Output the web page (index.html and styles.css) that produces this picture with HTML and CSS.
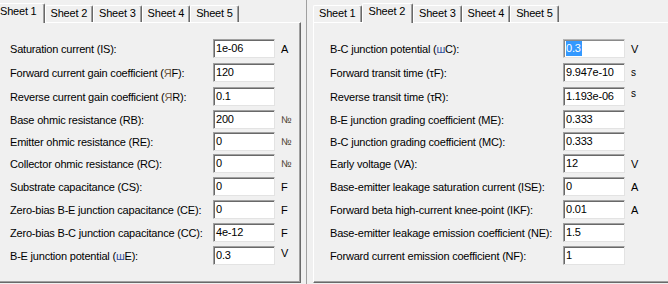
FILE: index.html
```html
<!DOCTYPE html>
<html>
  <head>
    <title>Transistor model parameters</title>
    <link rel="stylesheet" href="styles.css">
  </head>
  <body>
    <div class="window">
      <!-- left pane: sheet 1 -->
      <div class="pane pane-left">
        <div class="tabctl">
          <div class="tabs">
            <div class="tab active">Sheet 1</div>
            <div class="tab">Sheet 2</div>
            <div class="tab">Sheet 3</div>
            <div class="tab">Sheet 4</div>
            <div class="tab">Sheet 5</div>
          </div>
          <div class="page page-left">
            <div class="row">
              <span class="label">Saturation current (IS):</span>
              <div class="field">1e-06</div>
              <span class="unit">A</span>
            </div>
            <div class="row tall">
              <span class="label">Forward current gain coefficient (<span class="odd">Я</span>F):</span>
              <div class="field">120</div>
              <span class="unit"></span>
            </div>
            <div class="row">
              <span class="label">Reverse current gain coefficient (<span class="odd">Я</span>R):</span>
              <div class="field">0.1</div>
              <span class="unit"></span>
            </div>
            <div class="row">
              <span class="label">Base ohmic resistance (RB):</span>
              <div class="field">200</div>
              <span class="unit ohm">№</span>
            </div>
            <div class="row short">
              <span class="label">Emitter ohmic resistance (RE):</span>
              <div class="field">0</div>
              <span class="unit ohm">№</span>
            </div>
            <div class="row">
              <span class="label">Collector ohmic resistance (RC):</span>
              <div class="field">0</div>
              <span class="unit ohm">№</span>
            </div>
            <div class="row">
              <span class="label">Substrate capacitance (CS):</span>
              <div class="field">0</div>
              <span class="unit">F</span>
            </div>
            <div class="row">
              <span class="label">Zero-bias B-E junction capacitance (CE):</span>
              <div class="field">0</div>
              <span class="unit">F</span>
            </div>
            <div class="row">
              <span class="label">Zero-bias B-C junction capacitance (CC):</span>
              <div class="field">4e-12</div>
              <span class="unit">F</span>
            </div>
            <div class="row">
              <span class="label">B-E junction potential (<span class="phi">ш</span>E):</span>
              <div class="field">0.3</div>
              <span class="unit up">V</span>
            </div>
          </div>
        </div>
      </div>

      <!-- right pane: sheet 2 -->
      <div class="pane pane-right">
        <div class="tabctl">
          <div class="tabs">
            <div class="tab">Sheet 1</div>
            <div class="tab active">Sheet 2</div>
            <div class="tab">Sheet 3</div>
            <div class="tab">Sheet 4</div>
            <div class="tab">Sheet 5</div>
          </div>
          <div class="page page-right">
            <div class="row">
              <span class="label">B-C junction potential (<span class="phi">ш</span>C):</span>
              <div class="field focus"><span class="sel">0.3</span></div>
              <span class="unit">V</span>
            </div>
            <div class="row tall">
              <span class="label">Forward transit time (τF):</span>
              <div class="field">9.947e-10</div>
              <span class="unit small">s</span>
            </div>
            <div class="row">
              <span class="label">Reverse transit time (τR):</span>
              <div class="field">1.193e-06</div>
              <span class="unit small up">s</span>
            </div>
            <div class="row">
              <span class="label">B-E junction grading coefficient (ME):</span>
              <div class="field">0.333</div>
              <span class="unit"></span>
            </div>
            <div class="row short">
              <span class="label">B-C junction grading coefficient (MC):</span>
              <div class="field">0.333</div>
              <span class="unit"></span>
            </div>
            <div class="row">
              <span class="label">Early voltage (VA):</span>
              <div class="field">12</div>
              <span class="unit">V</span>
            </div>
            <div class="row">
              <span class="label">Base-emitter leakage saturation current (ISE):</span>
              <div class="field">0</div>
              <span class="unit">A</span>
            </div>
            <div class="row">
              <span class="label">Forward beta high-current knee-point (IKF):</span>
              <div class="field">0.01</div>
              <span class="unit">A</span>
            </div>
            <div class="row">
              <span class="label">Base-emitter leakage emission coefficient (NE):</span>
              <div class="field">1.5</div>
              <span class="unit"></span>
            </div>
            <div class="row">
              <span class="label">Forward current emission coefficient (NF):</span>
              <div class="field">1</div>
              <span class="unit"></span>
            </div>
          </div>
        </div>
      </div>
    </div>
  </body>
</html>
```

FILE: styles.css
```css
* {
  box-sizing: border-box;
}
body {
  margin: 0;
  background: #f0f0f0;
  font-family: "Liberation Sans", Arial, sans-serif;
  font-size: 11px;
  letter-spacing: -0.2px;
  color: #000;
  overflow: hidden;
}
.window {
  display: flex;
  height: 284px;
}
.pane {
  height: 284px;
  overflow: hidden;
}
.pane-left {
  width: 301px;
  flex: none;
}
.pane-right {
  flex: 1;
  margin-left: 5px;
  padding-left: 6px;
  border-left: 1px solid #a0a0a0;
}
.pane-left .tabctl {
  margin-left: -7px;
  width: 308px;
}
.pane-right .tabctl {
  width: 400px;
}

/* tab strip */
.tabs {
  display: flex;
  align-items: flex-end;
  height: 22px;
}
.tab {
  height: 17px;
  line-height: 15px;
  padding: 0 5px;
  border: 1px solid #fff;
  border-right-color: #696969;
  border-bottom: none;
  border-radius: 2px 2px 0 0;
  box-shadow: inset -1px 0 0 #a0a0a0;
  white-space: nowrap;
}
.tab.active {
  height: 20px;
  line-height: 15px;
  margin-bottom: -1px;
  padding: 0 7px 0 6px;
  background: #f0f0f0;
  position: relative;
  z-index: 1;
}

/* tab page */
.page {
  height: 261px;
  border: 1px solid #fff;
  border-right-color: #696969;
  border-bottom-color: #696969;
  box-shadow: inset -1px -1px 0 #a0a0a0;
  padding-top: 14px;
  padding-left: 16px;
}
.row {
  display: grid;
  column-gap: 6px;
  align-items: center;
  height: 23px;
}
.row.tall {
  height: 25px;
}
.row.short {
  height: 21px;
}
.page-left .row {
  grid-template-columns: 197px 62px auto;
}
.page-right .row {
  grid-template-columns: 227px 62px auto;
}
.label {
  white-space: nowrap;
}
.odd {
  color: #6e5a46;
}
.phi {
  color: #2f4f9c;
}

/* sunken edit box */
.field {
  height: 19px;
  line-height: 17px;
  padding-left: 2px;
  background: #fff;
  border-top: 1px solid #a0a0a0;
  border-left: 1px solid #a0a0a0;
  border-right: 1px solid #e3e3e3;
  border-bottom: 1px solid #e3e3e3;
  box-shadow: inset 1px 1px 0 #696969;
  white-space: nowrap;
  overflow: hidden;
}
.field.focus {
  border-color: #b4b4b4 #e3e3e3 #e3e3e3 #b4b4b4;
  box-shadow: inset 1px 1px 0 #8a8a8a;
}
.sel {
  display: inline-block;
  background: #3399ff;
  color: #fff;
  line-height: 15px;
  padding-right: 1px;
}
.unit {
  white-space: nowrap;
}
.unit.ohm {
  font-size: 10px;
  color: #4a4030;
}
.unit.small {
  font-size: 10px;
}
.unit.up {
  margin-top: -6px;
}
```
